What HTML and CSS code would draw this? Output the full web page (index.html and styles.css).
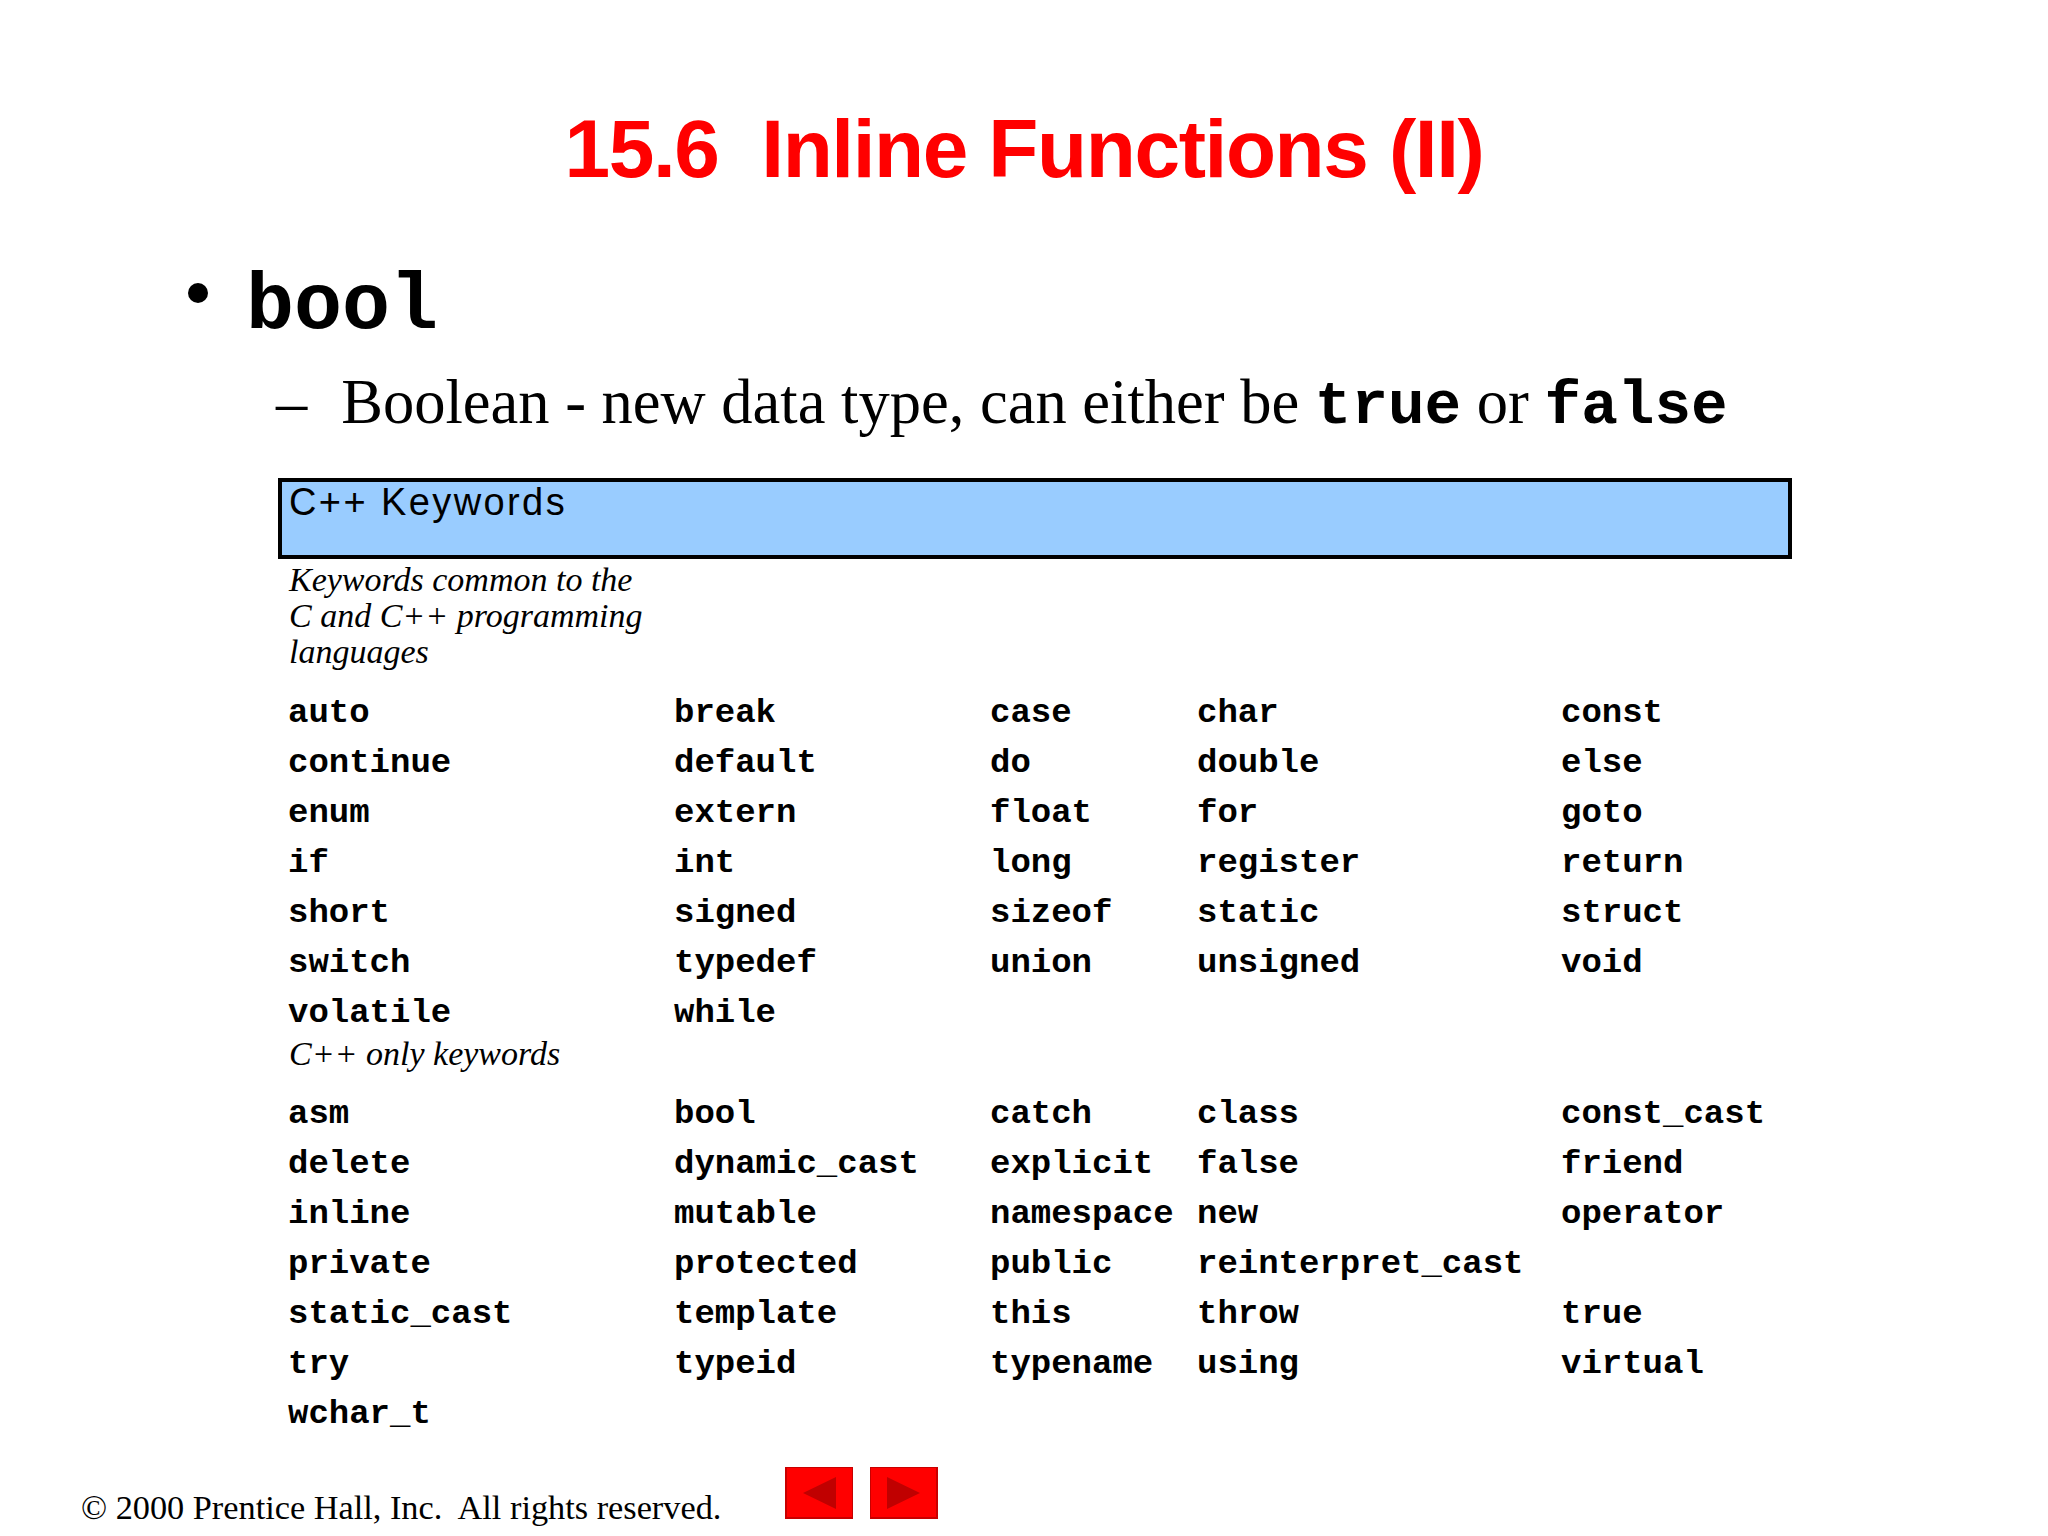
FILE: index.html
```html
<!DOCTYPE html>
<html lang="en">
<head>
<meta charset="utf-8">
<title>15.6 Inline Functions (II)</title>
<link rel="stylesheet" href="styles.css">
</head>
<body>
<div class="slide">
  <h1 class="title">15.6  Inline Functions (II)</h1>
  <div class="point"><span class="dot"></span>bool</div>
  <div class="subpoint"><span class="dash">–</span>Boolean - new data type, can either be <code>true</code> or <code>false</code></div>
  <div class="kw-box">C++ Keywords</div>
  <div class="caption">Keywords common to the<br>C and C++ programming<br>languages</div>
  <div class="kw-grid">
    <span>auto</span><span>break</span><span>case</span><span>char</span><span>const</span>
    <span>continue</span><span>default</span><span>do</span><span>double</span><span>else</span>
    <span>enum</span><span>extern</span><span>float</span><span>for</span><span>goto</span>
    <span>if</span><span>int</span><span>long</span><span>register</span><span>return</span>
    <span>short</span><span>signed</span><span>sizeof</span><span>static</span><span>struct</span>
    <span>switch</span><span>typedef</span><span>union</span><span>unsigned</span><span>void</span>
    <span>volatile</span><span>while</span>
  </div>
  <div class="label2">C++ only keywords</div>
  <div class="kw-grid second">
    <span>asm</span><span>bool</span><span>catch</span><span>class</span><span>const_cast</span>
    <span>delete</span><span>dynamic_cast</span><span>explicit</span><span>false</span><span>friend</span>
    <span>inline</span><span>mutable</span><span>namespace</span><span>new</span><span>operator</span>
    <span>private</span><span>protected</span><span>public</span><span>reinterpret_cast</span><span></span>
    <span>static_cast</span><span>template</span><span>this</span><span>throw</span><span>true</span>
    <span>try</span><span>typeid</span><span>typename</span><span>using</span><span>virtual</span>
    <span>wchar_t</span>
  </div>
  <div class="footer">
    <span class="copyright">© 2000 Prentice Hall, Inc.  All rights reserved.</span>
    <div class="nav">
      <svg class="btn" width="68" height="52" viewBox="0 0 68 52" aria-label="Previous">
        <rect x="0" y="0" width="68" height="52" fill="#c80000"/>
        <rect x="2" y="1" width="65" height="49" fill="#ff0000"/>
        <polygon points="18,26 51,10 51,42" fill="#c00000"/>
      </svg>
      <svg class="btn" width="68" height="52" viewBox="0 0 68 52" aria-label="Next">
        <rect x="0" y="0" width="68" height="52" fill="#c80000"/>
        <rect x="1" y="1" width="65" height="49" fill="#ff0000"/>
        <polygon points="17,10 17,42 50,26" fill="#c00000"/>
      </svg>
    </div>
  </div>
</div>
</body>
</html>
```

FILE: styles.css
```css
* { box-sizing: border-box; }
html, body { margin: 0; padding: 0; background: #fff; }

.slide {
  width: 2048px;
  height: 1536px;
  overflow: hidden;
  padding-top: 99px;
  background: #fff;
  color: #000;
}

.title {
  margin: 0;
  height: 100px;
  line-height: 100px;
  font-family: "Liberation Sans", Arial, sans-serif;
  font-weight: bold;
  font-size: 82px;
  letter-spacing: -1.4px;
  color: #ff0000;
  text-align: center;
  white-space: pre;
}

.point {
  margin-top: 58px;
  height: 100px;
  line-height: 100px;
  padding-left: 188px;
  font-family: "Liberation Mono", "Courier New", monospace;
  font-weight: bold;
  font-size: 80px;
  white-space: nowrap;
}

.dot {
  display: inline-block;
  width: 20px;
  height: 20px;
  border-radius: 50%;
  background: #000;
  vertical-align: 25px;
  margin-right: 38px;
}

.subpoint {
  margin-top: 5px;
  height: 80px;
  line-height: 80px;
  padding-left: 276px;
  font-family: "Liberation Serif", "Times New Roman", serif;
  font-size: 62.5px;
  white-space: nowrap;
}

.dash { margin-right: 34px; }

.subpoint code {
  font-family: "Liberation Mono", "Courier New", monospace;
  font-weight: bold;
  font-size: 61px;
}

.kw-box {
  margin: 36px 0 0 278px;
  width: 1514px;
  height: 81px;
  border: 4px solid #000;
  background: #99ccff;
  padding-left: 7px;
  font-family: "Liberation Sans", Arial, sans-serif;
  font-size: 38px;
  line-height: 40px;
  letter-spacing: 2.4px;
}

.caption {
  margin: 2.5px 0 0 289px;
  font-family: "Liberation Serif", "Times New Roman", serif;
  font-style: italic;
  font-size: 34px;
  line-height: 36px;
}

.kw-grid {
  margin: 18.5px 0 0 288px;
  display: grid;
  grid-template-columns: 386px 316px 207px 364px 260px;
  grid-auto-rows: 50px;
  line-height: 50px;
  font-family: "Liberation Mono", "Courier New", monospace;
  font-weight: bold;
  font-size: 34px;
  white-space: nowrap;
}

.kw-grid.second { margin-top: 19px; }

.label2 {
  margin: 0 0 0 289px;
  font-family: "Liberation Serif", "Times New Roman", serif;
  font-style: italic;
  font-size: 34px;
  line-height: 32px;
}

.footer {
  margin-top: 28px;
  display: flex;
  align-items: flex-start;
  padding-left: 81px;
}

.copyright {
  width: 704px;
  margin-top: 19.5px;
  font-family: "Liberation Serif", "Times New Roman", serif;
  font-size: 34.3px;
  line-height: 40px;
  white-space: pre;
}

.nav {
  display: flex;
  gap: 17px;
}

.btn { display: block; }
```
